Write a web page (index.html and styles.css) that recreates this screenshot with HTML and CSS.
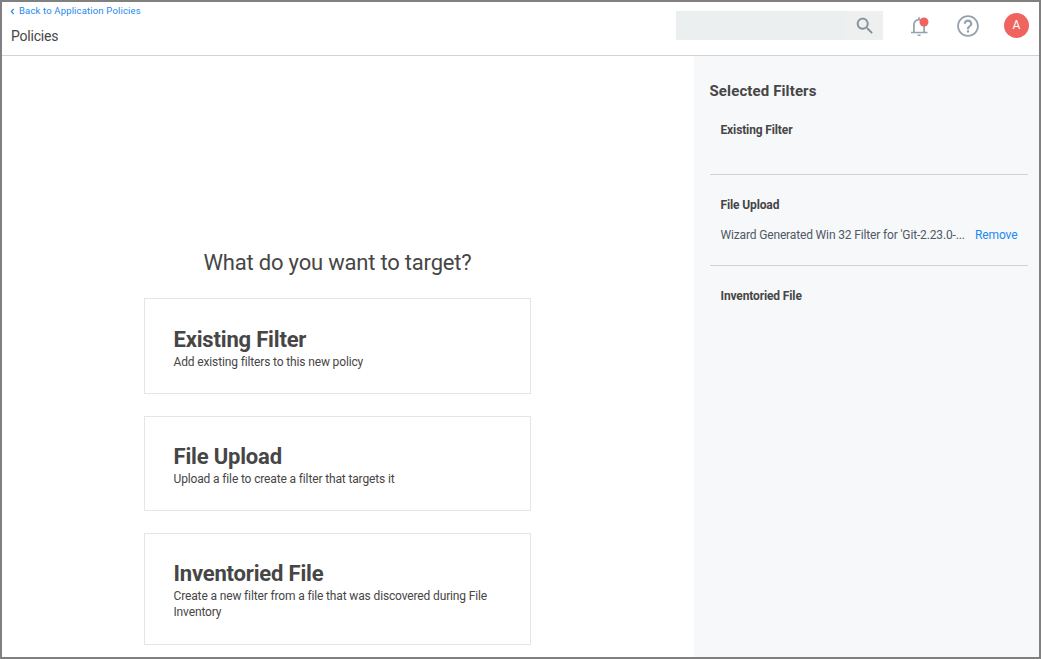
FILE: index.html
```html
<!DOCTYPE html>
<html lang="en">
<head>
<meta charset="utf-8">
<title>Policies</title>
<link rel="stylesheet" href="styles.css">
</head>
<body>
<div class="app">
  <header class="header">
    <div class="heading">
      <a class="back"><svg class="chevron" width="5" height="7" viewBox="0 0 5 7"><path d="M3.7 1 1.3 3.5 3.7 6" fill="none" stroke="currentColor" stroke-width="1.1"/></svg><span>Back to Application Policies</span></a>
      <h1 class="page-title">Policies</h1>
    </div>
    <div class="tools">
      <div class="search">
        <div class="search-button">
          <svg width="22" height="22" viewBox="0 0 24 24"><path fill="#84909a" d="M15.5 14h-.79l-.28-.27C15.41 12.59 16 11.11 16 9.5 16 5.91 13.09 3 9.5 3S3 5.91 3 9.5 5.91 16 9.5 16c1.61 0 3.09-.59 4.23-1.57l.27.28v.79l5 4.99L20.49 19l-4.99-5zm-6 0C7.01 14 5 11.99 5 9.5S7.01 5 9.5 5 14 7.01 14 9.5 11.99 14 9.5 14z"/></svg>
        </div>
      </div>
      <svg class="bell" width="24" height="24" viewBox="0 0 24 24">
        <path d="M6.9 18v-7.2C6.900 7.800 9 5.600 12 5.600s5.100 2.200 5.100 5.200V18M4 18.500h16.500M12 3.300v2.300" fill="none" stroke="#95a1ab" stroke-width="1.700"/>
        <path d="M10.300 20.400h3.600c0 1-.8 1.700-1.800 1.700s-1.800-.7-1.800-1.700z" fill="#95a1ab"/>
        <circle cx="17" cy="8" r="4.500" fill="#f06460"/>
      </svg>
      <svg class="help" width="26" height="26" viewBox="0 0 24 24"><path fill="#95a1ab" d="M11 18h2v-2h-2v2zm1-16C6.480 2 2 6.480 2 12s4.480 10 10 10 10-4.480 10-10S17.520 2 12 2zm0 18.300c-4.580 0-8.300-3.720-8.300-8.300s3.720-8.300 8.300-8.300 8.300 3.720 8.300 8.300-3.720 8.300-8.300 8.300zm0-14.300c-2.210 0-4 1.790-4 4h2c0-1.100.9-2 2-2s2 .9 2 2c0 2-3 1.750-3 5h2c0-2.250 3-2.500 3-5 0-2.210-1.790-4-4-4z"/></svg>
      <div class="avatar">A</div>
    </div>
  </header>
  <div class="body">
    <main class="main">
      <h2 class="question">What do you want to target?</h2>
      <div class="cards">
        <section class="card card-first"><h3 class="card-title">Existing Filter</h3><p class="card-text">Add existing filters to this new policy</p></section>
        <section class="card"><h3 class="card-title">File Upload</h3><p class="card-text">Upload a file to create a filter that targets it</p></section>
        <section class="card card-tall"><h3 class="card-title">Inventoried File</h3><p class="card-text">Create a new filter from a file that was discovered during File Inventory</p></section>
      </div>
    </main>
    <aside class="side">
      <h2 class="side-title">Selected Filters</h2>
      <section class="group group-first"><h3 class="group-title">Existing Filter</h3></section>
      <section class="group"><h3 class="group-title">File Upload</h3>
        <div class="entry"><span class="entry-name">Wizard Generated Win 32 Filter for 'Git-2.23.0-...</span><a class="remove">Remove</a></div>
      </section>
      <section class="group group-last"><h3 class="group-title">Inventoried File</h3></section>
    </aside>
  </div>
</div>
</body>
</html>
```
FILE: styles.css
```css
* { box-sizing: border-box; }
body, h1, h2, h3, p { margin: 0; }
body { font-family: Roboto, "Liberation Sans", sans-serif; color: #464646; overflow: hidden; }
svg { display: block; flex: none; }

.app { width: 1041px; height: 659px; border: 2px solid #808080; background: #fff; display: flex; flex-direction: column; }

.header { height: 54px; flex: none; border-bottom: 1px solid #d0d2d3; display: flex; justify-content: space-between; }
.heading { padding: 3px 0 0 8px; }
.back { display: flex; align-items: center; gap: 4px; height: 12px; font-size: 9.5px; line-height: 12px; letter-spacing: 0.16px; color: #2389f0; white-space: nowrap; }
.page-title { margin: 9px 0 0 1px; font-size: 14px; line-height: 20px; font-weight: 400; letter-spacing: -0.2px; }
.tools { display: flex; align-items: center; height: 47px; padding-right: 10px; }
.search { width: 207px; height: 29px; margin-right: 24px; background: #ebeff0; display: flex; justify-content: flex-end; }
.search-button { width: 37px; display: flex; align-items: center; justify-content: center; background: #eeefef; }
.bell { margin-right: 23.5px; }
.help { margin-right: 23.5px; }
.avatar { width: 25px; height: 25px; border-radius: 50%; background: #f06460; color: #fff; font-size: 12px; line-height: 25px; text-align: center; }

.body { flex: 1; min-height: 0; display: flex; }
.main { width: 692px; padding: 193px 0 0 142px; }
.question { width: 387px; text-align: center; font-size: 22px; line-height: 28px; font-weight: 400; letter-spacing: -0.2px; }
.cards { margin-top: 21px; width: 387px; display: flex; flex-direction: column; gap: 22px; }
.card { height: 95px; padding: 26px 28px 0 28.5px; border: 1px solid #e4e5e6; }
.card-first { height: 96px; padding-top: 27px; }
.card-tall { height: 112px; }
.card-title { font-size: 22px; line-height: 28px; font-weight: 700; letter-spacing: -0.18px; }
.card-text { font-size: 12px; line-height: 16px; letter-spacing: -0.14px; }

.side { flex: 1; background: #f6f8fa; padding: 25px 11px 0 16px; }
.side-title { margin-left: -0.5px; font-size: 15px; line-height: 20px; font-weight: 700; letter-spacing: 0.12px; }
.group { height: 91px; padding: 22px 10.5px 0 10.5px; border-bottom: 1px solid #d0d3d4; }
.group-first { height: 74px; padding-top: 21px; }
.group-last { border-bottom: 0; }
.group-title { font-size: 12px; line-height: 16px; font-weight: 700; letter-spacing: -0.13px; }
.entry { display: flex; justify-content: space-between; margin-top: 14px; font-size: 12px; line-height: 16px; letter-spacing: -0.15px; white-space: nowrap; color: #515866; }
.remove { color: #2389f0; letter-spacing: -0.1px; }
```
